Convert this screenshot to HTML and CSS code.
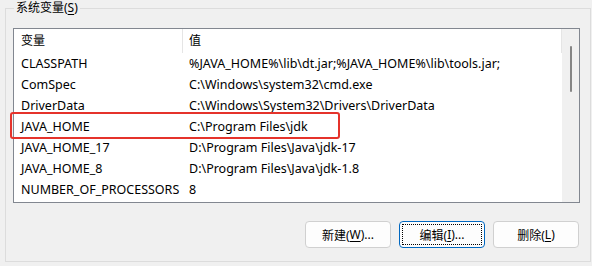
FILE: index.html
```html
<!DOCTYPE html>
<html>
<head>
<meta charset="utf-8">
<link rel="stylesheet" href="styles.css">
</head>
<body>
<fieldset class="group">
  <legend class="group-label">系统变量(<u>S</u>)</legend>
  <div class="listbox">
    <div class="list-main">
      <div class="row head">
        <div class="c1">变量</div>
        <div class="c2">值</div>
      </div>
      <div class="row"><div class="c1">CLASSPATH</div><div class="c2">%JAVA_HOME%\lib\dt.jar;%JAVA_HOME%\lib\tools.jar;</div></div>
      <div class="row"><div class="c1">ComSpec</div><div class="c2">C:\Windows\system32\cmd.exe</div></div>
      <div class="row"><div class="c1">DriverData</div><div class="c2">C:\Windows\System32\Drivers\DriverData</div></div>
      <div class="row"><div class="c1">JAVA_HOME</div><div class="c2">C:\Program Files\jdk</div></div>
      <div class="row"><div class="c1">JAVA_HOME_17</div><div class="c2">D:\Program Files\Java\jdk-17</div></div>
      <div class="row"><div class="c1">JAVA_HOME_8</div><div class="c2">D:\Program Files\Java\jdk-1.8</div></div>
      <div class="row"><div class="c1">NUMBER_OF_PROCESSORS</div><div class="c2">8</div></div>
      <div class="highlight"></div>
    </div>
    <div class="scrollbar"><div class="thumb"></div></div>
  </div>
  <div class="buttons">
    <button class="btn">新建(<u>W</u>)...</button>
    <button class="btn default"><span class="focus">编辑(<u>I</u>)...</span></button>
    <button class="btn">删除(<u>L</u>)</button>
  </div>
</fieldset>
</body>
</html>
```

FILE: styles.css
```css
html, body {
  margin: 0;
  padding: 0;
  background: #f0f0f0;
  width: 592px;
  height: 266px;
  overflow: hidden;
  font-family: "Noto Sans", "Noto Sans CJK SC", sans-serif;
  font-size: 12px;
  color: #000;
}

.group {
  margin: 0 0 0 5px;
  width: 586px;
  height: 262px;
  box-sizing: border-box;
  border: 1px solid #dcdcdc;
  padding: 0 10px 0 7px;
  display: flex;
  flex-direction: column;
}

.group-label {
  padding: 0 2px;
  margin-left: 1px;
  line-height: 16px;
  color: #000;
}

.group-label u, .btn u {
  text-decoration: underline;
  text-underline-offset: 2px;
}

.listbox {
  margin-top: 12px;
  height: 175px;
  box-sizing: border-box;
  border: 1px solid #828790;
  background: #fff;
  display: flex;
}

.list-main {
  flex: 1;
  position: relative;
}

.row {
  display: flex;
  height: 21px;
  align-items: center;
  white-space: nowrap;
  font-size: 12.5px;
}

.row.head {
  height: 24px;
  font-size: 12px;
}

.c1 {
  width: 169px;
  padding-left: 7px;
  box-sizing: border-box;
  flex: none;
}

.c2 {
  padding-left: 6px;
  flex: 1;
}

.head .c1,
.head .c2 {
  border-right: 1px solid #e5e5e5;
  height: 24px;
  line-height: 24px;
}

.scrollbar {
  width: 17px;
  background: #f0f0f0;
  flex: none;
  display: flex;
  justify-content: center;
}

.thumb {
  width: 2px;
  height: 46px;
  margin-top: 17px;
  background: #858585;
  border-radius: 1px;
}

.highlight {
  position: absolute;
  left: -4px;
  top: 83px;
  width: 330px;
  height: 27px;
  box-sizing: border-box;
  border: 2px solid #e5332b;
  border-radius: 3px;
}

.buttons {
  display: flex;
  justify-content: flex-end;
  gap: 8px;
  margin-top: 18px;
  padding-right: 1px;
}

.btn {
  width: 86px;
  height: 27px;
  box-sizing: border-box;
  background: #fdfdfd;
  border: 1px solid #d0d0d0;
  border-radius: 4px;
  font-family: inherit;
  font-size: 12px;
  color: #000;
  padding: 0;
  display: flex;
  align-items: center;
  justify-content: center;
}

.btn.default {
  border: 1px solid #0067c0;
  padding: 2px;
}

.focus {
  flex: 1;
  align-self: stretch;
  display: flex;
  align-items: center;
  justify-content: center;
  border: 1px dotted #000;
}
```
